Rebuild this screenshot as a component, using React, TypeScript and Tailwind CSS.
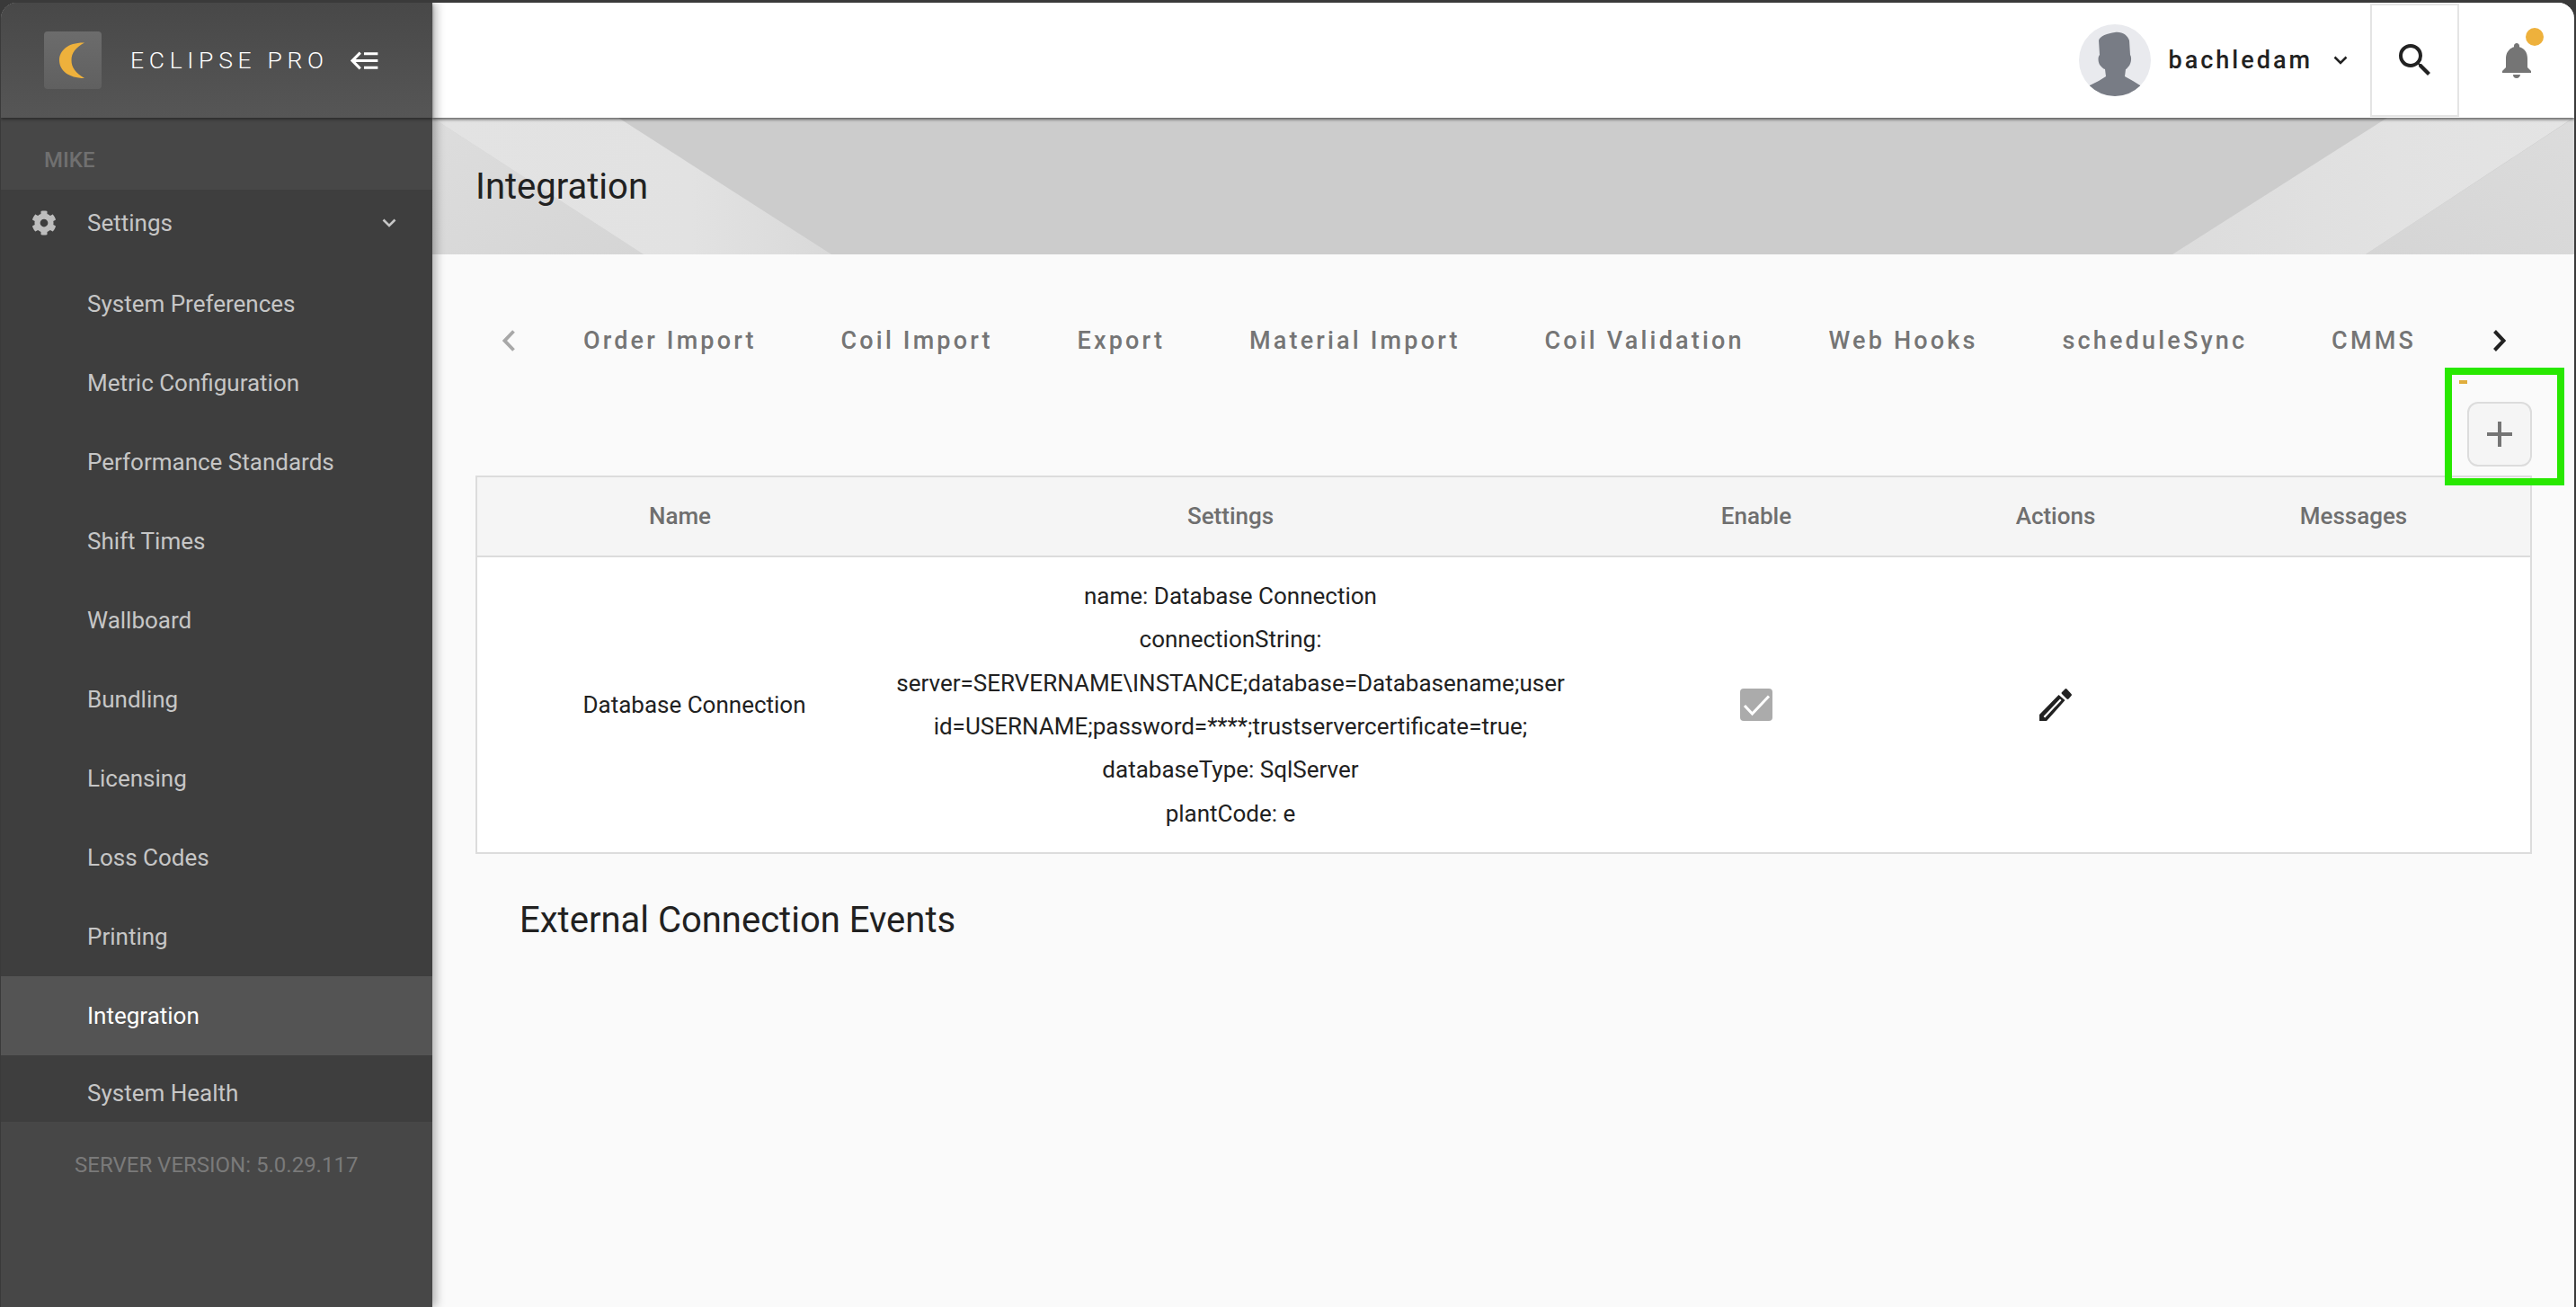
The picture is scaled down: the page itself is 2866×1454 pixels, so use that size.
import { FaCog } from "react-icons/fa";
import { MdNotifications, MdSearch } from "react-icons/md";

const menu = [
  "System Preferences",
  "Metric Configuration",
  "Performance Standards",
  "Shift Times",
  "Wallboard",
  "Bundling",
  "Licensing",
  "Loss Codes",
  "Printing",
];

const tabs = [
  "Order Import",
  "Coil Import",
  "Export",
  "Material Import",
  "Coil Validation",
  "Web Hooks",
  "scheduleSync",
  "CMMS",
];

const settingsLines = [
  "name: Database Connection",
  "connectionString:",
  "server=SERVERNAME\\INSTANCE;database=Databasename;user",
  "id=USERNAME;password=****;trustservercertificate=true;",
  "databaseType: SqlServer",
  "plantCode: e",
];

function Chevron({ className }: { className: string }) {
  return (
    <svg viewBox="0 0 16 10" className={className} fill="none" stroke="currentColor" strokeWidth="2.6">
      <path d="M1.5 1.5 8 8l6.5-6.5" />
    </svg>
  );
}

function Avatar() {
  return (
    <svg viewBox="0 0 80 80" className="w-20 h-20 rounded-full shrink-0 bg-[#e9eaee]">
      <path
        fill="#787c85"
        d="M40 9C48 8 54 12 56 18L57 34C59 37 58 43 56 46C54 48 53 50 52 50L51 58L60 63L68 68L68 80L12 80L12 68L22 63L30 58L29 50C27 50 25 47 23 45C21 41 21 36 23 34L22 18C23 13 32 10 40 9Z"
      />
    </svg>
  );
}

function Banner() {
  return (
    <svg viewBox="0 0 2383 152" preserveAspectRatio="none" className="absolute inset-0 w-full h-full">
      <defs>
        <linearGradient id="bandLeft" x1="0" y1="0" x2="1" y2="0">
          <stop offset="0" stopColor="#e3e3e3" />
          <stop offset="0.65" stopColor="#e2e2e2" />
          <stop offset="1" stopColor="#d9d9d9" />
        </linearGradient>
        <linearGradient id="triLeft" x1="0" y1="0" x2="1" y2="1">
          <stop offset="0" stopColor="#dddddd" />
          <stop offset="1" stopColor="#d5d5d5" />
        </linearGradient>
        <linearGradient id="bandRight" x1="0" y1="0" x2="1" y2="0">
          <stop offset="0" stopColor="#dcdcdc" />
          <stop offset="0.55" stopColor="#e2e2e2" />
          <stop offset="1" stopColor="#e4e4e4" />
        </linearGradient>
        <linearGradient id="triRight" x1="0" y1="1" x2="1" y2="0">
          <stop offset="0" stopColor="#d5d5d5" />
          <stop offset="1" stopColor="#dcdcdc" />
        </linearGradient>
      </defs>
      <polygon points="0,0 235,152 0,152" fill="url(#triLeft)" />
      <polygon points="0,0 207,0 444,152 235,152" fill="url(#bandLeft)" />
      <polygon points="2175,0 2382,0 2151,152 1936,152" fill="url(#bandRight)" />
      <polygon points="2383,0 2383,152 2151,152" fill="url(#triRight)" />
    </svg>
  );
}

export default function App() {
  return (
    <div className="w-[2866px] h-[1454px] bg-[#3a3a3a] pt-[3px] pl-[1px] pr-[2px] overflow-hidden font-[Roboto,sans-serif] text-[26px]">
      <div className="h-full flex rounded-t-[18px] overflow-hidden bg-[#fafafa]">
        <aside className="w-[480px] shrink-0 flex flex-col bg-[#474747] relative z-20 shadow-[4px_0_10px_rgba(0,0,0,0.3)]">
          <div className="h-[128px] shrink-0 flex items-center pl-[48px] bg-gradient-to-b from-[#484848] to-[#565656] shadow-[0_2px_3px_rgba(0,0,0,0.4)] relative">
            <div className="w-16 h-16 rounded-[4px] bg-gradient-to-b from-[#6c6c6c] to-[#606060] flex items-center justify-center">
              <svg viewBox="0 0 28 40" className="w-7 h-10 -ml-[2px]">
                <path fill="#eeb13c" d="M28 .5C10 0 0 9 0 20C0 31 10 40 28 40C18 34 13.500 28 13.500 20C13.500 12 18 6 28 .5Z" />
              </svg>
            </div>
            <span className="ml-[32px] text-[26.5px] font-light tracking-[5.7px] text-white whitespace-nowrap">ECLIPSE PRO</span>
            <svg viewBox="0 0 24 24" className="w-[37px] h-[37px] ml-[22px] text-white" fill="currentColor">
              <path d="M5,13L9,17L7.6,18.42L1.18,12L7.6,5.58L9,7L5,11H21V13H5M21,6V8H11V6H21M21,16V18H11V16H21Z" />
            </svg>
          </div>
          <div className="h-[80px] shrink-0 flex items-center pl-[48px] pt-[13px] text-[24px] font-medium text-[#707070]">MIKE</div>
          <nav className="flex flex-col bg-[#3e3e3e] text-[#c6c6c6]">
            <div className="h-[83px] pb-[9px] flex items-center">
              <FaCog className="w-7 h-7 ml-[34px] text-[#bdbdbd]" />
              <span className="ml-[34px] flex-1">Settings</span>
              <Chevron className="w-4 h-[10px] mr-[40px] text-[#c6c6c6]" />
            </div>
            {menu.map((item) => (
              <div key={item} className="h-[88px] flex items-center pl-[96px]">
                {item}
              </div>
            ))}
            <div className="h-[88px] flex items-center pl-[96px] bg-[#545454] text-white">Integration</div>
            <div className="h-[74px] pt-[10px] flex items-center pl-[96px]">System Health</div>
          </nav>
          <div className="pt-[30px] pl-[82px] text-[24px] text-[#7a7a7a] whitespace-nowrap">SERVER VERSION: 5.0.29.117</div>
        </aside>

        <main className="flex-1 min-w-0 flex flex-col">
          <header className="h-[128px] shrink-0 bg-white flex items-center justify-end relative z-10 shadow-[0_2px_3px_rgba(0,0,0,0.55)]">
            <Avatar />
            <span className="ml-[20px] text-[27px] font-medium tracking-[3px] text-[#222222]">bachledam</span>
            <Chevron className="w-4 h-[10px] ml-[23px] mr-[25px] text-[#222222]" />
            <div className="w-[99px] self-stretch mt-[1px] mb-[1px] border-2 border-[#e4e4e4] flex items-center justify-center">
              <MdSearch className="w-12 h-12 text-[#222222]" />
            </div>
            <div className="w-[128px] self-stretch flex items-center justify-center relative">
              <MdNotifications className="w-12 h-12 text-[#757575]" />
              <span className="absolute top-[28px] left-[74px] w-5 h-5 rounded-full bg-[#eeb13c]" />
            </div>
          </header>

          <div className="h-[152px] shrink-0 bg-[#cccccc] relative flex items-center pl-[48px]">
            <Banner />
            <h1 className="relative pt-[2px] text-[40px] text-[#212121]">Integration</h1>
          </div>

          <div className="flex-1 pl-[48px] pr-[47px] pt-[60px] relative">
            <div className="h-[72px] flex items-center">
              <div className="w-[73px] shrink-0 flex justify-center">
                <svg viewBox="0 0 14 24" className="w-[14px] h-6 text-[#a8a8a8]" fill="none" stroke="currentColor" strokeWidth="3.800">
                  <path d="M12.500 1.500 2.500 12l10 10.500" />
                </svg>
              </div>
              <div className="flex-1 flex items-center overflow-hidden text-[27px] text-[#757575] font-medium tracking-[3.18px] whitespace-nowrap">
                {tabs.map((t) => (
                  <span key={t} className="px-[46.9px]">
                    {t}
                  </span>
                ))}
              </div>
              <div className="w-[72px] shrink-0 flex justify-center">
                <svg viewBox="0 0 14 24" className="w-[14px] h-6 text-[#222222]" fill="none" stroke="currentColor" strokeWidth="4">
                  <path d="M1.500 1.500 11.500 12l-10 10.500" />
                </svg>
              </div>
            </div>

            <div className="mt-[32px] mb-[10px] flex justify-end relative">
              <button className="w-[72px] h-[72px] rounded-[12px] border-2 border-[#dcdcdc] bg-[#f5f5f5] flex items-center justify-center">
                <svg viewBox="0 0 28 28" className="w-7 h-7 text-[#757575]" fill="currentColor">
                  <path d="M12 0h4v12h12v4H16v12h-4V16H0v-4h12z" />
                </svg>
              </button>
              {/* highlight drawn on top of the screenshot */}
              <div className="absolute right-[-36px] top-[-38px] w-[133px] h-[131px] border-8 border-[#28e800] z-10">
                <span className="absolute left-[8px] top-[6px] w-[9px] h-1 bg-[#e0ad3c]" />
              </div>
            </div>

            <div className="border-2 border-[#dcdcdc] bg-white">
              <div className="grid grid-cols-[419px_838px_332px_334px_1fr] h-[89px] items-center text-center border-b-2 border-[#dcdcdc] bg-[#f5f5f5] text-[#6f6f6f] font-medium pr-[32px]">
                <div className="pl-[32px]">Name</div>
                <div>Settings</div>
                <div>Enable</div>
                <div>Actions</div>
                <div>Messages</div>
              </div>
              <div className="grid grid-cols-[419px_838px_332px_334px_1fr] h-[328px] items-center text-center text-[#212121] pr-[32px]">
                <div className="pl-[64px] whitespace-nowrap">Database Connection</div>
                <div className="leading-[48.3px]">
                  {settingsLines.map((line) => (
                    <div key={line} className="whitespace-nowrap">
                      {line}
                    </div>
                  ))}
                </div>
                <div className="flex justify-center">
                  <div className="w-9 h-9 rounded-[4px] bg-[#ababab] flex items-center justify-center">
                    <svg viewBox="0 0 36 36" className="w-9 h-9" fill="none" stroke="white" strokeWidth="3">
                      <path d="M5 19l8.500 9L32 8.500" />
                    </svg>
                  </div>
                </div>
                <div className="flex justify-center">
                  <svg viewBox="0 0 36 36" className="w-9 h-9 text-[#212121]" fill="currentColor" fillRule="evenodd">
                    <path d="M30.500 .5l5 5.500a1.500 1.500 0 0 1 0 2l-3 3.500a1.500 1.500 0 0 1-2 0L25 6a1.500 1.500 0 0 1 0-2l3.500-3.500a1.500 1.500 0 0 1 2 0z" />
                    <path d="M21.500 7l7 6L8 36H0v-7zM23 11.500L4.500 31l1.700 1.400L24.500 13z" />
                  </svg>
                </div>
                <div />
              </div>
            </div>

            <h2 className="mt-[54px] ml-[49px] text-[40px] leading-[40px] text-[#212121]">External Connection Events</h2>
          </div>
        </main>
      </div>
    </div>
  );
}
